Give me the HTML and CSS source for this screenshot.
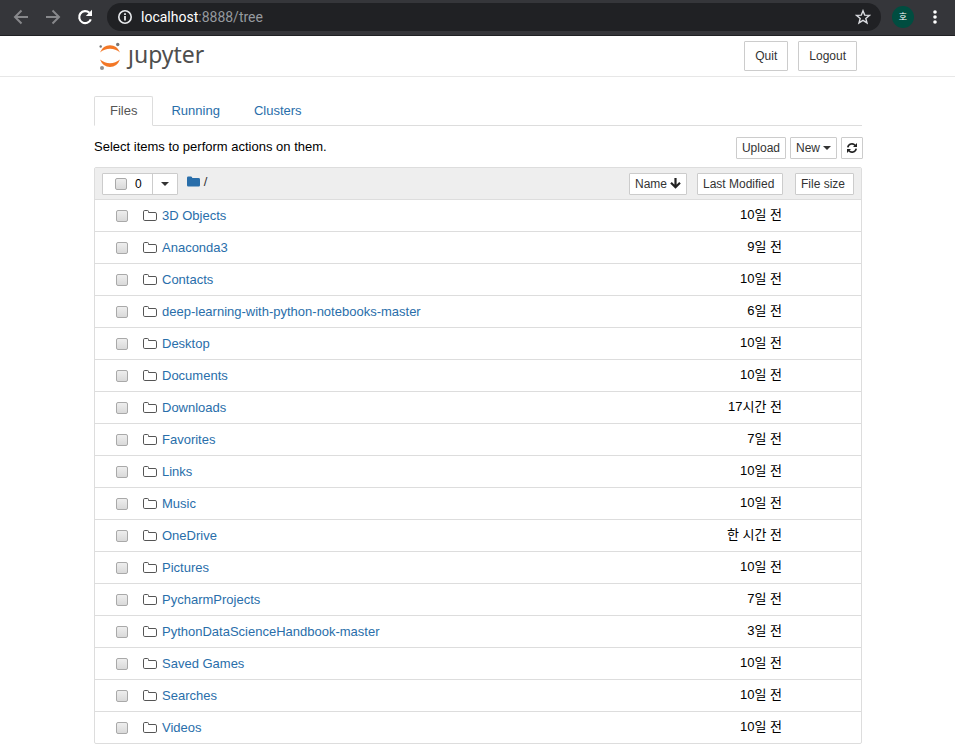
FILE: index.html
```html
<!DOCTYPE html>
<html lang="ko">
<head>
<meta charset="utf-8">
<meta name="viewport" content="width=device-width, initial-scale=1">
<title>Home Page - Jupyter</title>
<link rel="stylesheet" href="styles.css">
</head>
<body>
<svg class="sprite" aria-hidden="true">
  <symbol id="folder" viewBox="0 0 14 12">
    <path d="M.5 9.200V1.800Q.5.5 1.800.5H4.400Q5.500.5 5.500 1.500V2.500H12Q13.500 2.500 13.500 3.800V9.200Q13.500 10.500 12.200 10.500H1.800Q.5 10.500.5 9.200Z" fill="none" stroke="#555"/>
  </symbol>
</svg>

<div class="browser">
  <button class="nav-button" type="button" aria-label="Back">
    <svg width="16" height="16" viewBox="0 0 16 16"><path d="M15 8H2M8.500 1.500 2 8l6.500 6.500" fill="none" stroke="#87888b" stroke-width="2"/></svg>
  </button>
  <button class="nav-button" type="button" aria-label="Forward">
    <svg width="16" height="16" viewBox="0 0 16 16"><path d="M1 8h13M7.500 1.500 14 8l-6.500 6.500" fill="none" stroke="#87888b" stroke-width="2"/></svg>
  </button>
  <button class="nav-button" type="button" aria-label="Reload">
    <svg width="16" height="16" viewBox="0 0 16 16"><path d="M13.800 10.300A6 6 0 1 1 12.400 3.800" fill="none" stroke="#fff" stroke-width="2.200"/><path d="M15 .8V7H8.800Z" fill="#fff"/></svg>
  </button>
  <div class="address">
    <svg width="16" height="16" viewBox="0 0 16 16"><circle cx="8" cy="8" r="6.200" fill="none" stroke="#e8eaed" stroke-width="1.600"/><path d="M7.100 7h1.800v4.500H7.100zM7.100 4.200h1.800V6H7.100z" fill="#e8eaed"/></svg>
    <span class="url"><span class="host">localhost</span>:8888/tree</span>
    <button class="star" type="button" aria-label="Bookmark this page">
      <svg width="16" height="16" viewBox="0 0 16 16"><path d="m8 1.800 1.700 4.300 4.800.3-3.700 3 1.200 4.500L8 11.400l-4 2.500 1.200-4.500-3.700-3 4.800-.3Z" fill="none" stroke="#dadce0" stroke-width="1.400"/></svg>
    </button>
  </div>
  <button class="avatar" type="button">호</button>
  <button class="menu" type="button" aria-label="Menu">
    <svg width="4" height="16" viewBox="0 0 4 16" fill="#fff"><circle cx="2" cy="3" r="1.800"/><circle cx="2" cy="8" r="1.800"/><circle cx="2" cy="13" r="1.800"/></svg>
  </button>
</div>

<header class="site-header">
  <div class="container header-row">
    <a class="logo" href="#">
      <svg width="24" height="28" viewBox="0 0 24 28">
        <path d="M1 10.500Q4 3.300 11 3.300T21 10.500Q16.500 6.800 11 6.800T1 10.500ZM1 17.500Q4 25 11 25T21 17.500Q16.500 21.200 11 21.200T1 17.500Z" fill="#f37726"/>
        <circle cx="18.700" cy="2.500" r="1.700" fill="#767677"/><circle cx="1.700" cy="4.500" r="1.200" fill="#767677"/><circle cx="3" cy="26" r="2" fill="#8f8f90"/>
      </svg>
      <span class="wordmark"><span class="dotless">j</span>upyter</span>
    </a>
    <div class="session">
      <button class="button" type="button">Quit</button>
      <button class="button" type="button">Logout</button>
    </div>
  </div>
</header>

<main class="container">
  <nav class="tabs">
    <a class="tab active" href="#">Files</a>
    <a class="tab" href="#">Running</a>
    <a class="tab" href="#">Clusters</a>
  </nav>

  <div class="toolbar">
    <span class="hint">Select items to perform actions on them.</span>
    <div class="actions">
      <button class="button small" type="button">Upload</button>
      <button class="button small" type="button">New <span class="caret"></span></button>
      <button class="button small" type="button" aria-label="Refresh">
        <svg width="10" height="12" viewBox="0 0 10 12"><path d="M.8 5.400A4.200 4.200 0 0 1 8.200 3.400M9.200 6.600A4.200 4.200 0 0 1 1.800 8.600" fill="none" stroke="#222" stroke-width="1.600"/><path d="M10 1v4H6zM0 11V7h4z" fill="#222"/></svg>
      </button>
    </div>
  </div>

  <table class="files">
    <colgroup><col><col class="col-modified"><col class="col-size"></colgroup>
    <thead>
      <tr>
        <th>
          <div class="list-head">
            <div class="select-group">
              <label class="select-all"><input class="check" type="checkbox" aria-label="Select all"><span>0</span></label>
              <button class="select-menu" type="button" aria-label="Select by type"><span class="caret"></span></button>
            </div>
            <a class="crumb" href="#" aria-label="Home"><svg width="13" height="15" viewBox="0 0 13 15"><path d="M0 9.200V1.800Q0 .5 1.300.5H4Q5.300.5 5.300 2H11.500Q13 2 13 3.400V9.200Q13 10.500 11.700 10.500H1.300Q0 10.500 0 9.200Z" fill="#296eaa"/></svg></a>
            <span class="slash">/</span>
            <button class="button small sort-name" type="button">Name <svg width="11" height="11" viewBox="0 0 11 11"><path d="M5.500 0v9M1 4.700l4.500 4.500L10 4.700" fill="none" stroke="#222" stroke-width="2.200"/></svg></button>
          </div>
        </th>
        <th><button class="button small sort" type="button">Last Modified</button></th>
        <th><button class="button small sort" type="button">File size</button></th>
      </tr>
    </thead>
    <tbody id="file-rows"></tbody>
  </table>
</main>
<script src="files.js"></script>
</body>
</html>
```

FILE: styles.css
```css
* { box-sizing: border-box; }

body {
  margin: 0;
  background: #fff;
  color: #000;
  font: 13px/20px "Liberation Sans", "Noto Sans CJK KR", sans-serif;
}

a { color: #296eaa; text-decoration: none; }
button { margin: 0; font: inherit; cursor: pointer; }
svg { display: block; flex: none; }
.sprite { position: absolute; width: 0; height: 0; }

.browser {
  display: flex;
  align-items: center;
  height: 36px;
  padding: 0 18px 2px 13px;
  background: #35363a;
  border-bottom: 1px solid #202124;
}
.nav-button, .star, .menu { padding: 0; border: 0; background: none; }
.nav-button { width: 16px; margin-right: 16px; }
.address {
  display: flex;
  flex: 1;
  align-items: center;
  height: 28px;
  margin-right: 11px;
  margin-left: -2px;
  padding: 0 10px;
  border-radius: 14px;
  background: #202124;
}
.url {
  flex: 1;
  margin-left: 8px;
  color: #969a9f;
  font: 14px/20px Roboto, sans-serif;
}
.host { color: #fff; }
.avatar {
  width: 22px;
  height: 22px;
  margin-right: 19px;
  padding: 0;
  border: 0;
  border-radius: 50%;
  background: #004d40;
  color: #fff;
  font-size: 9px;
  line-height: 22px;
}

.container { max-width: 769px; margin: 0 auto; padding-left: 1px; }
.site-header { border-bottom: 1px solid #e7e7e7; }
.header-row { display: flex; align-items: center; justify-content: space-between; height: 40px; }
.logo { display: flex; align-items: center; margin-left: 5px; }
.wordmark {
  margin-left: 5px;
  padding-bottom: 5px;
  color: #4e4e4e;
  font: 23px/32px "Noto Sans", sans-serif;
}
.dotless { display: inline-block; clip-path: inset(12px -4px -4px -4px); }
.session { display: flex; gap: 10px; margin-right: 5px; }

.button {
  display: flex;
  align-items: center;
  height: 30px;
  padding: 0 10px;
  border: 1px solid #ccc;
  border-radius: 1px;
  background: #fff;
  color: #333;
  font-size: 12px;
  white-space: nowrap;
}
.button.small { height: 22px; padding: 0 5px; }
.button.sort { margin-left: 10px; padding-right: 8px; }
.caret {
  display: inline-block;
  border-top: 4px solid #333;
  border-right: 4px solid transparent;
  border-left: 4px solid transparent;
}
.button .caret { margin-left: 3px; }

.tabs { display: flex; gap: 2px; margin-top: 19px; border-bottom: 1px solid #ddd; }
.tab {
  margin-bottom: -1px;
  padding: 4px 15px;
  border: 1px solid transparent;
  border-radius: 2px 2px 0 0;
}
.tab.active { border-color: #ddd; border-bottom-color: #fff; background: #fff; color: #555; }

.toolbar { display: flex; align-items: center; justify-content: space-between; height: 41px; }
.actions { display: flex; gap: 4px; margin-right: -1px; padding-top: 3px; }

.files {
  width: 100%;
  border: 1px solid #ddd;
  border-radius: 2px;
  border-spacing: 0;
  table-layout: fixed;
}
.col-modified { width: 98px; }
.col-size { width: 76px; }
.files th { height: 31px; padding: 0; background: #eee; font-weight: normal; }
.files td { height: 32px; padding: 0; border-top: 1px solid #ddd; }
.list-head { display: flex; align-items: center; padding-left: 7px; }
.select-group {
  display: flex;
  height: 22px;
  border: 1px solid #ccc;
  border-radius: 1px;
  background: #fff;
  font-size: 12px;
}
.select-all { display: flex; align-items: center; gap: 8px; padding: 0 10px 0 12px; }
.select-menu { padding: 0 8px; border: 0; border-left: 1px solid #ccc; background: #fff; line-height: 12px; }
.select-menu .caret { vertical-align: middle; }
.check {
  flex: none;
  width: 12px;
  height: 12px;
  margin: 0;
  border: 1px solid #a9a9a9;
  border-radius: 2px;
  background: linear-gradient(#eee, #d9d9d9);
  appearance: none;
}
.crumb { margin-left: 9px; }
.slash { margin-left: 4px; padding-bottom: 3px; color: #333; }
.sort-name { margin-left: auto; }
.sort-name svg { margin-left: 3px; }
.item { display: flex; align-items: center; padding-left: 21px; }
.item svg { margin: 0 5px 0 15px; }
.files .modified { padding: 0 3px 2px 0; text-align: right; }
```

FILE: files.js
```js
const files = [
  ["3D Objects", "10일 전"],
  ["Anaconda3", "9일 전"],
  ["Contacts", "10일 전"],
  ["deep-learning-with-python-notebooks-master", "6일 전"],
  ["Desktop", "10일 전"],
  ["Documents", "10일 전"],
  ["Downloads", "17시간 전"],
  ["Favorites", "7일 전"],
  ["Links", "10일 전"],
  ["Music", "10일 전"],
  ["OneDrive", "한 시간 전"],
  ["Pictures", "10일 전"],
  ["PycharmProjects", "7일 전"],
  ["PythonDataScienceHandbook-master", "3일 전"],
  ["Saved Games", "10일 전"],
  ["Searches", "10일 전"],
  ["Videos", "10일 전"]
];

document.getElementById("file-rows").innerHTML = files.map(([name, modified]) => `
  <tr>
    <td>
      <div class="item">
        <input class="check" type="checkbox" aria-label="${name}">
        <svg width="14" height="12"><use href="#folder"/></svg>
        <a href="#">${name}</a>
      </div>
    </td>
    <td class="modified">${modified}</td>
    <td></td>
  </tr>`).join("");
```
